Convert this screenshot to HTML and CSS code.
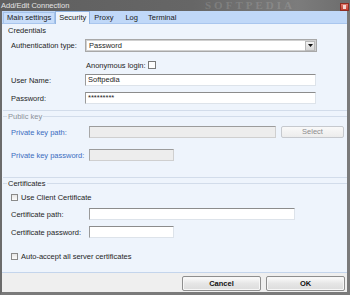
FILE: index.html
```html
<!DOCTYPE html>
<html>
<head>
<meta charset="utf-8">
<link rel="stylesheet" href="styles.css">
</head>
<body>
<div class="window">
  <div class="titlebar">
    <span class="title">Add/Edit Connection</span>
    <span class="watermark">SOFTPEDIA</span>
    <span class="close"><span class="close-mark"></span></span>
  </div>
  <div class="frame">
    <div class="tabs">
      <div class="tab tab-boxed">Main settings</div>
      <div class="tab tab-active">Security</div>
      <div class="tab">Proxy</div>
      <div class="tab tab-log">Log</div>
      <div class="tab tab-term">Terminal</div>
    </div>
    <div class="panel">
      <div class="legend legend-first"><span>Credentials</span></div>

      <div class="row row-auth">
        <span class="label">Authentication type:</span>
        <div class="select">
          <span class="select-text">Password</span>
          <span class="select-btn"><svg width="7" height="5" viewBox="0 0 7 5"><path d="M1 1h5L3.5 4z" fill="#111"/></svg></span>
        </div>
      </div>

      <div class="row row-anon">
        <span class="label"></span>
        <span class="anon-text">Anonymous login:</span>
        <span class="checkbox anon-box"></span>
      </div>

      <div class="row row-user">
        <span class="label">User Name:</span>
        <div class="input input-wide">Softpedia</div>
      </div>

      <div class="row row-pass">
        <span class="label">Password:</span>
        <div class="input input-wide">*********</div>
      </div>

      <div class="divider div-cred"></div>

      <div class="legend legend-gray legend-pk"><span>Public key</span></div>

      <div class="row row-pkpath">
        <span class="label label-blue label-wide">Private key path:</span>
        <div class="input input-disabled input-pk"></div>
        <div class="btn-select">Select</div>
      </div>

      <div class="row row-pkpass">
        <span class="label label-blue label-wide">Private key password:</span>
        <div class="input input-disabled input-short"></div>
      </div>

      <div class="divider div-pk"></div>

      <div class="legend legend-cert"><span>Certificates</span></div>

      <div class="row row-usecert">
        <span class="checkbox"></span>
        <span class="check-text">Use Client Certificate</span>
      </div>

      <div class="row row-certpath">
        <span class="label label-wide">Certificate path:</span>
        <div class="input input-cert"></div>
      </div>

      <div class="row row-certpass">
        <span class="label label-wide">Certificate password:</span>
        <div class="input input-short"></div>
      </div>

      <div class="row row-auto">
        <span class="checkbox"></span>
        <span class="check-text">Auto-accept all server certificates</span>
      </div>
    </div>
    <div class="footer">
      <div class="button">Cancel</div>
      <div class="button">OK</div>
    </div>
  </div>
</div>
</body>
</html>
```

FILE: styles.css
```css
* { box-sizing: border-box; }
html, body {
  margin: 0;
  padding: 0;
}
body {
  width: 350px;
  height: 295px;
  overflow: hidden;
  font-family: "Liberation Sans", Arial, sans-serif;
  font-size: 7.5px;
  color: #1e1e1e;
  background: #6a6a6a;
}
.window {
  width: 350px;
  height: 295px;
  display: flex;
  flex-direction: column;
}
.titlebar {
  position: relative;
  height: 11px;
  flex: 0 0 11px;
  display: flex;
  align-items: center;
  justify-content: space-between;
  background: linear-gradient(to right, #5f5f5f 0%, #666 55%, #7c7c7c 85%, #6d6d6d 100%);
  color: #e4e4e4;
  overflow: hidden;
  padding-left: 1px;
}
.title {
  line-height: 11px;
}
.watermark {
  position: absolute;
  left: 205px;
  top: 0;
  font-family: "Liberation Serif", serif;
  font-weight: bold;
  font-size: 11px;
  line-height: 11px;
  letter-spacing: 3px;
  color: rgba(255, 255, 255, 0.14);
}
.close {
  width: 9px;
  height: 8px;
  margin-right: 1px;
  margin-top: 2px;
  background: linear-gradient(#e07a6c, #c13d2f);
  border: 1px solid #8e2c22;
  display: flex;
  align-items: center;
  justify-content: center;
}
.close-mark {
  width: 3px;
  height: 4px;
  background: #f3d6d2;
}
.frame {
  flex: 1;
  display: flex;
  flex-direction: column;
  border-left: 2px solid #6b6b6b;
  border-right: 3px solid #7a7a7a;
  border-bottom: 3px solid #7a7a7a;
  background: #eef4fc;
}
.tabs {
  height: 13px;
  flex: 0 0 13px;
  display: flex;
  align-items: flex-end;
  background: #c0d8f8;
  padding-left: 1px;
  border-bottom: 1px solid #a9c6ee;
}
.tab {
  height: 11px;
  line-height: 10px;
  padding: 0 3px;
  border: 1px solid transparent;
  border-bottom: none;
  color: #1a1a1a;
}
.tab-boxed {
  border-color: #a5c3ea;
  background: #c8ddf9;
}
.tab-active {
  height: 13px;
  line-height: 12px;
  background: #eef4fc;
  border-color: #94b6e2;
  margin-bottom: -1px;
}
.tab-log { margin-left: 4px; }
.tab-term { margin-left: 2px; }

.panel {
  flex: 1;
  display: flex;
  flex-direction: column;
  padding-top: 2px;
}
.legend {
  height: 9px;
  display: flex;
  align-items: center;
  padding-left: 1px;
}
.legend::before {
  content: "";
  width: 4px;
  border-top: 1px solid #d2dcea;
  margin-right: 1px;
}
.legend::after {
  content: "";
  flex: 1;
  border-top: 1px solid #d2dcea;
  margin-left: 1px;
}
.legend-first::before,
.legend-first::after {
  border-top-color: transparent;
}
.legend-gray { color: #8b9099; }
.divider {
  height: 1px;
  border-top: 1px solid #d2dcea;
  margin-left: 1px;
}
.row {
  display: flex;
  align-items: center;
}
.label {
  width: 83px;
  flex: 0 0 83px;
  padding-left: 9px;
  white-space: nowrap;
}
.label-wide {
  width: 87px;
  flex: 0 0 87px;
}
.label-blue { color: #3b6cc0; }

.row-auth { margin-top: 4px; height: 13px; }
.select {
  width: 232px;
  height: 13px;
  border: 1px solid #a8a8a8;
  box-shadow: inset 0 0 0 1px #d0d0d0;
  background: #fff;
  display: flex;
  align-items: center;
  justify-content: space-between;
  padding: 0 1px 0 3px;
}
.select-btn {
  width: 10px;
  height: 10px;
  background: linear-gradient(#f2f2f2, #d6d6d6);
  border: 1px solid #b8b8b8;
  display: flex;
  align-items: center;
  justify-content: center;
}
.row-anon { margin-top: 8px; height: 10px; }
.anon-text { margin-left: 1px; }
.checkbox {
  width: 7px;
  height: 7px;
  flex: 0 0 7px;
  border: 1px solid #8a8a8a;
  background: linear-gradient(#e6e6e6, #fbfbfb);
}
.anon-box {
  width: 8px;
  height: 8px;
  flex: 0 0 8px;
  margin-left: 2px;
  background: #fdfdfd;
  border-color: #7a7a7a;
}
.input {
  height: 12px;
  background: #fff;
  border: 1px solid #dde3ea;
  border-top-color: #8c8c8c;
  border-left-color: #9a9a9a;
  padding-left: 2px;
  line-height: 10px;
  white-space: nowrap;
}
.input-wide { width: 231px; }
.row-user { margin-top: 4px; }
.row-pass { margin-top: 6px; }
.div-cred { margin-top: 6px; }
.legend-pk { margin-top: 1px; }
.row-pkpath { margin-top: 5px; }
.input-disabled {
  background: #ededed;
  border-color: #cfcfcf;
  border-top-color: #9c9c9c;
  border-left-color: #a8a8a8;
}
.input-pk { width: 187px; }
.btn-select {
  width: 63px;
  height: 12px;
  margin-left: 5px;
  border: 1px solid #c6c9ce;
  border-radius: 2px;
  background: linear-gradient(#f9f9f9, #ececec);
  color: #8d8d8d;
  text-align: center;
  line-height: 10px;
}
.row-pkpass { margin-top: 11px; }
.input-short { width: 85px; }
.div-pk { margin-top: 16px; }
.legend-cert { margin-top: 1px; }
.row-usecert { margin-top: 4px; height: 10px; padding-left: 9px; }
.check-text { margin-left: 3px; }
.row-certpath { margin-top: 6px; }
.input-cert { width: 206px; }
.row-certpass { margin-top: 6px; }
.row-auto { margin-top: 13px; height: 10px; padding-left: 9px; }

.footer {
  height: 20px;
  flex: 0 0 20px;
  border-top: 1px solid #c4d5ec;
  background: #efefef;
  display: flex;
  justify-content: flex-end;
  align-items: flex-start;
  gap: 5px;
  padding: 3px 2px 0 0;
}
.button {
  width: 79px;
  height: 15px;
  border: 1px solid #8e8e8e;
  border-radius: 2px;
  background: linear-gradient(#fdfdfd, #e6e6e6 50%, #dcdcdc);
  box-shadow: inset 0 0 0 1px #f7f7f7;
  font-weight: bold;
  text-align: center;
  line-height: 13px;
  color: #111;
}
```
